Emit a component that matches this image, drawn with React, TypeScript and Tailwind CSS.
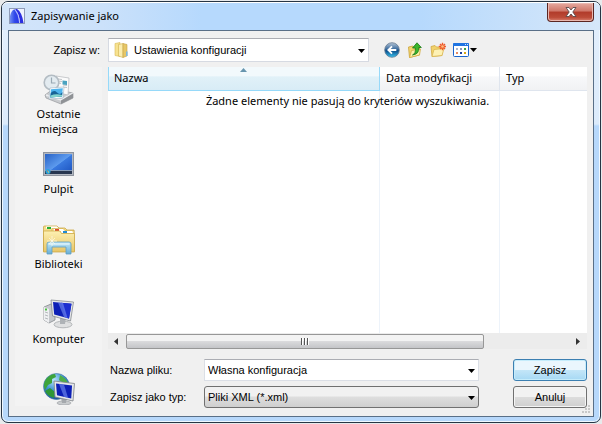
import type { ReactNode } from "react";
import { useState } from "react";

const ui = "font-['Noto_Sans','Open_Sans',sans-serif]";
const classic = "font-['Liberation_Sans',Arial,sans-serif]";

function AppIcon() {
  return (
    <svg width="16" height="16" viewBox="0 0 16 16" aria-hidden="true">
      <defs>
        <linearGradient id="arch" x1="0" y1="0" x2="1" y2="0">
          <stop offset="0" stopColor="#6f8cf2" />
          <stop offset="0.5" stopColor="#3048ea" />
          <stop offset="1" stopColor="#2a35e6" />
        </linearGradient>
      </defs>
      <rect x="0.5" y="0.5" width="15" height="15" fill="#eef3ff" stroke="#8f9cb8" />
      <path d="M6 1H8Q13 4 14.500 15H11Q10.500 6 6 1Z" fill="#2b2fe0" />
      <path d="M1 15V8Q2 3 5.500 1Q10 6 10.500 15Z" fill="url(#arch)" />
      <path d="M5.500 1Q10 6 10.700 15" fill="none" stroke="#c4d0ff" strokeWidth="0.7" />
    </svg>
  );
}

function FolderIcon() {
  return (
    <svg width="16" height="16" viewBox="0 0 16 16" aria-hidden="true">
      <path d="M1 1.500L6 0.500V14.500L1 13.500Z" fill="#f7e28f" stroke="#d9bb58" strokeWidth="0.6" />
      <path d="M4.500 2.500L9 1.500V15.500L4.500 14Z" fill="#fbedae" stroke="#cfae4c" strokeWidth="0.6" />
      <path d="M9 1.500L13 2.500V14L9 15.500Z" fill="#e6c767" stroke="#c6a145" strokeWidth="0.6" />
      <path d="M12 9.500h1.600v4.500H12z" fill="#7fb6df" />
    </svg>
  );
}

function BackIcon() {
  return (
    <svg width="16" height="16" viewBox="0 0 16 16" aria-hidden="true">
      <defs>
        <linearGradient id="orb" x1="0" y1="0" x2="0" y2="1">
          <stop offset="0" stopColor="#b4c4d6" />
          <stop offset="0.4" stopColor="#4674a4" />
          <stop offset="0.55" stopColor="#0c4d8a" />
          <stop offset="1" stopColor="#38c3f0" />
        </linearGradient>
      </defs>
      <circle cx="8" cy="8" r="7.3" fill="url(#orb)" stroke="#667a90" strokeWidth="0.8" />
      <path d="M12.300 8H4.800M8 4.300L4.300 8L8 11.700" fill="none" stroke="#fff" strokeWidth="1.800" />
    </svg>
  );
}

function UpIcon() {
  return (
    <svg width="16" height="16" viewBox="0 0 16 16" aria-hidden="true">
      <path d="M1.500 5L6 4L7 5.500L12.500 5V13L2.500 15.500Z" fill="#f4d56d" stroke="#c9a23a" strokeWidth="0.8" />
      <path d="M2.500 15.500L4.500 8.500L13.500 7L12.500 13Z" fill="#fdf0a9" stroke="#d3ad45" strokeWidth="0.8" />
      <path d="M5.500 13Q9 11.500 8.300 6H5.500L10 0.800L14.300 5.500H11.800Q12.500 12 5.500 13Z" fill="#3bb52b" stroke="#187a17" strokeWidth="0.8" />
    </svg>
  );
}

function NewFolderIcon() {
  return (
    <svg width="16" height="16" viewBox="0 0 16 16" aria-hidden="true">
      <path d="M1 4.500L5 3.500L6.500 5L12 5V13.500L2 14.500Z" fill="#f2d26b" stroke="#cfa945" strokeWidth="0.8" />
      <path d="M2 14.500L4 7.500L14 6.500L12 13.500Z" fill="#fdf1b4" stroke="#d9b650" strokeWidth="0.8" />
      <path d="M12.500 0.800V8.200M8.800 4.500H16M10 2L15 7M15 2L10 7" stroke="#ee5a2c" strokeWidth="1.400" />
      <circle cx="12.500" cy="4.500" r="1.300" fill="#ffc080" />
    </svg>
  );
}

function ViewIcon() {
  return (
    <svg width="16" height="16" viewBox="0 0 16 16" aria-hidden="true">
      <rect x="0.500" y="1.500" width="15" height="13" rx="1" fill="#fff" stroke="#1a64cc" />
      <path d="M0 2Q0 1 1 1H15Q16 1 16 2V4H0Z" fill="#1f74e2" />
      <path d="M12 2h1v1h-1zM14 2h1v1h-1z" fill="#cfe2ff" />
      <path d="M3 6h2v2H3z" fill="#a9b5cc" />
      <path d="M7 6h2v2H7z" fill="#8a97b8" />
      <path d="M11 6h2v2h-2z" fill="#37a04a" />
      <path d="M3 10h2v2H3z" fill="#e58a63" />
      <path d="M7 10h2v2H7z" fill="#1c3f9e" />
      <path d="M11 10h2v2h-2z" fill="#d9a616" />
    </svg>
  );
}

function RecentIcon() {
  return (
    <svg width="32" height="32" viewBox="0 0 32 32" aria-hidden="true">
      <path d="M2 22L10 16L30 20V25L18 31L3 25Z" fill="#c9cbce" stroke="#96999d" strokeWidth="0.7" />
      <path d="M3 22L18 27L30 20" fill="none" stroke="#eceef0" strokeWidth="1.5" />
      <path d="M18 27.500V31L30 25V20.500Z" fill="#8f9296" />
      <path d="M13 3L26 5L25 22L12 19Z" fill="#fbfbfb" stroke="#b5b8bb" strokeWidth="0.7" />
      <path d="M15 6l4 .5M15 8l4 .5M15 10l3 .4M20 12l4 .5M20 14l4 .5" stroke="#c0c5ca" />
      <path d="M19.500 7.500l4.500.600v4l-4.500-.600z" fill="#4aa3c0" />
      <circle cx="8.500" cy="9.500" r="7.300" fill="#e3ebf0" stroke="#b3bcc3" strokeWidth="1.600" />
      <path d="M8.500 4.500V10H12.500" fill="none" stroke="#9aa9b4" strokeWidth="1.200" />
      <path d="M7 15L21 14L20 25L6 26Z" fill="#fff" stroke="#9eb4c4" strokeWidth="0.6" />
      <path d="M8 16.200L19.800 15.200L19 23.500L7.200 24.600Z" fill="#4db4ee" />
      <path d="M7.800 20Q11 16.500 14 19.500T19.500 19L19 23.500L7.200 24.600Z" fill="#176397" />
      <path d="M7.500 22.500Q13 20.500 19.200 22L19 23.500L7.200 24.600Z" fill="#83d4ce" />
    </svg>
  );
}

function DesktopIcon() {
  return (
    <svg width="32" height="32" viewBox="0 0 32 32" aria-hidden="true">
      <defs>
        <linearGradient id="wall" x1="0" y1="0" x2="1" y2="1">
          <stop offset="0" stopColor="#2862c6" />
          <stop offset="0.5" stopColor="#5d9bee" />
          <stop offset="0.52" stopColor="#3979df" />
          <stop offset="1" stopColor="#1a50bd" />
        </linearGradient>
      </defs>
      <rect x="0.500" y="4.500" width="30" height="23" fill="#b3b8c1" stroke="#8e949e" />
      <rect x="2" y="6" width="27" height="20" fill="url(#wall)" />
      <rect x="2" y="23" width="27" height="3" fill="#27364f" />
      <path d="M2 22.500H29" stroke="#8399b7" />
      <circle cx="5" cy="23.500" r="2.500" fill="#28a5dd" />
      <path d="M4 22.500h1v1H4z" fill="#f1743a" />
      <path d="M5 23.500h1v1H5z" fill="#f7dc57" />
    </svg>
  );
}

function LibrariesIcon() {
  return (
    <svg width="32" height="32" viewBox="0 0 32 32" aria-hidden="true">
      <defs>
        <linearGradient id="lib" x1="0" y1="0" x2="0" y2="1">
          <stop offset="0" stopColor="#fdf0b2" />
          <stop offset="1" stopColor="#e8c566" />
        </linearGradient>
        <linearGradient id="stand" x1="0" y1="0" x2="0" y2="1">
          <stop offset="0" stopColor="#c4e9f8" />
          <stop offset="1" stopColor="#68add4" />
        </linearGradient>
      </defs>
      <path d="M0.500 28V4Q0.500 3 1.500 3H14L16 5H22L24 7H31V28Z" fill="#f5dd8a" stroke="#cba849" strokeWidth="0.8" />
      <path d="M3 3.500H14L15.500 5.500H3Z" fill="#fff" />
      <path d="M4 4h4v2H4z" fill="#29ae36" />
      <path d="M9 28V5.500H20L22 7.500H31V28Z" fill="#f8e398" stroke="#cba849" strokeWidth="0.6" />
      <path d="M11 6H20L21.500 8H11Z" fill="#fff" />
      <path d="M12 6h4v2h-4z" fill="#df4d32" />
      <path d="M18 8H29L30 10H18Z" fill="#fff" />
      <path d="M20 8h4v2h-4z" fill="#218bd4" />
      <path d="M0.500 8H17L18.500 10.500H31.500V29H0.500Z" fill="url(#lib)" stroke="#c9a33f" strokeWidth="0.7" />
      <path d="M4 31V21Q4 19 6 19H26Q28 19 28 21V31H23V24H9V31Z" fill="url(#stand)" stroke="#5e9fc3" strokeWidth="0.8" />
      <path d="M5.500 21H26.500" stroke="#eefaff" />
      <path d="M9 13V23M4 18H14M6 15L12 21M12 15L6 21" stroke="#fffbe8" strokeWidth="0.7" />
    </svg>
  );
}

function ComputerIcon() {
  return (
    <svg width="32" height="32" viewBox="0 0 32 32" aria-hidden="true">
      <path d="M1 9L8 6L12 8V22L6 25L1 22Z" fill="#c5c8cc" stroke="#85898d" strokeWidth="0.8" />
      <path d="M1 9L6 11V25L1 22Z" fill="#eff0f2" />
      <path d="M2 14l3 1M2 17l3 1M2 20l3 1" stroke="#b4b8bc" />
      <path d="M2 10.500h2v2H2z" fill="#4bbd42" />
      <ellipse cx="20" cy="26.500" rx="9" ry="3.300" fill="#dfe0e1" stroke="#a4a8ab" strokeWidth="0.8" />
      <path d="M17 19H23L22 26H17Z" fill="#aeb2b6" />
      <path d="M8 2L30.500 4L27.500 23L9.500 18Z" fill="#e5e7e9" stroke="#878c91" strokeWidth="0.8" />
      <path d="M10 4L28.500 5.700L26 20.500L11.200 16.500Z" fill="#0c1fb6" />
      <path d="M18 4.700L28.500 5.700L26 20.500L23 19.700Z" fill="#1c2fd0" />
      <path d="M15 4.500L20 5L24.500 20L21 19.100Z" fill="#7992f4" opacity="0.6" />
    </svg>
  );
}

function NetworkIcon() {
  return (
    <svg width="32" height="32" viewBox="0 0 32 32" aria-hidden="true">
      <defs>
        <radialGradient id="globe" cx="0.4" cy="0.25" r="0.8">
          <stop offset="0" stopColor="#b8e6fa" />
          <stop offset="0.5" stopColor="#3b91d1" />
          <stop offset="1" stopColor="#134d99" />
        </radialGradient>
      </defs>
      <circle cx="13.500" cy="13.500" r="13" fill="url(#globe)" stroke="#42719f" strokeWidth="0.6" />
      <path d="M4 5Q8 1 12 1L13 4L9 6L9 10L5 12L2 17L1 13Q1 8 4 5Z" fill="#3da43b" />
      <path d="M2 18L7 15L12 19L11 25Q4 23 2 18Z" fill="#2f9736" />
      <path d="M17 2Q23 5 25 10L20 10L16 7Z" fill="#4fae48" />
      <ellipse cx="21" cy="30" rx="7" ry="2" fill="#c9ccce" stroke="#979b9f" strokeWidth="0.6" />
      <path d="M18 25H24L23 30H19Z" fill="#a5a9ad" />
      <path d="M11 8L31.500 10.500L30 28L12 24Z" fill="#e5e7e9" stroke="#7c8186" strokeWidth="0.8" />
      <path d="M13 10.500L29 12.500L28.200 25.500L14 22.200Z" fill="#0c1fb6" />
      <path d="M16 10.900L21 11.500L25 24.800L21 23.800Z" fill="#7992f4" opacity="0.6" />
    </svg>
  );
}

function Arrow({ className = "" }: { className?: string }) {
  return (
    <svg width="7" height="4" viewBox="0 0 7 4" className={className} aria-hidden="true">
      <path d="M0 0H7L3.500 4Z" fill="#000" />
    </svg>
  );
}

function Place({ label, children }: { label?: string; children: ReactNode }) {
  return (
    <button type="button" className="flex h-[75px] w-full shrink-0 flex-col items-center gap-px leading-[15px]">
      {children}
      {label && <span className="w-16 text-center">{label}</span>}
    </button>
  );
}

export default function App() {
  const [fileName, setFileName] = useState("Własna konfiguracja");

  return (
    <div className={`flex min-h-screen bg-[#e8eaec] p-px text-black ${ui} text-[11px]`}>
      <main className="flex min-w-0 flex-1 flex-col rounded-[7px] border border-[#273544] bg-[#b9d9fb] bg-[linear-gradient(to_bottom,#e3effc_0,#dcebfb_122px,#b7d8fb_124px)] px-1.5 pb-[5px] shadow-[inset_0_0_0_1px_#f0f8ff]">
        <header className="-mx-1.5 flex h-7 items-start justify-between rounded-t-[6px] border-t border-white bg-[linear-gradient(to_right,#d3e5fa,#cbe1fa_100px,#b6d9fd_200px,#b6d9fd_70%,#d6e7f9)] pl-[7px]">
          <div className="flex items-center gap-1.5 pt-[5px]">
            <AppIcon />
            <h1 className="leading-4">Zapisywanie jako</h1>
          </div>
          <button
            type="button"
            aria-label="Zamknij"
            className="mr-1.5 flex h-[19px] w-[47px] items-center justify-center rounded-b-[4px] border border-t-0 border-[#5b2622] bg-[linear-gradient(to_bottom,#e6a99f,#cf7769_45%,#b13b2a_50%,#bc4b38_80%,#d98170)] shadow-[inset_0_0_0_1px_#e9b8b0]"
          >
            <svg width="12" height="10" viewBox="0 0 12 10" aria-hidden="true">
              <path d="M1 0.500H4L6 3L8 0.500H11L7.800 5L11 9.500H8L6 7L4 9.500H1L4.200 5Z" fill="#fff" stroke="#5b4a4a" strokeWidth="0.900" />
            </svg>
          </button>
        </header>

        <form
          onSubmit={(e) => e.preventDefault()}
          className="relative flex flex-1 flex-col border border-[#596f87] bg-[#f0f0f0] px-1.5 pt-[7px] pb-[7px]"
        >
          <div className={`flex h-6 items-center ${classic}`}>
            <label htmlFor="folder" className="w-[93px] shrink-0 pr-2 text-right">
              Zapisz w:
            </label>
            <div className="relative h-full w-[261px]">
              <select
                id="folder"
                className="h-full w-full appearance-none border border-[#d6dae2] border-t-[#abadb3] bg-white pl-[25px] outline-none"
              >
                <option>Ustawienia konfiguracji</option>
              </select>
              <span className="pointer-events-none absolute top-1 left-1.5">
                <FolderIcon />
              </span>
              <Arrow className="pointer-events-none absolute top-[11px] right-1" />
            </div>
            <div className="ml-[15px] flex items-center gap-[7px]">
              <button type="button" aria-label="Wstecz"><BackIcon /></button>
              <button type="button" aria-label="W górę"><UpIcon /></button>
              <button type="button" aria-label="Nowy folder"><NewFolderIcon /></button>
              <button type="button" aria-label="Widok" className="flex items-center gap-px">
                <ViewIcon />
                <Arrow />
              </button>
            </div>
          </div>

          <div className="mt-[5px] flex flex-1 items-start">
            <nav className="mr-1.5 h-[339px] w-[87px] shrink-0 overflow-hidden bg-[#f3f3f3] pt-1.5">
              <Place label="Ostatnie miejsca"><RecentIcon /></Place>
              <Place label="Pulpit"><DesktopIcon /></Place>
              <Place label="Biblioteki"><LibrariesIcon /></Place>
              <Place label="Komputer"><ComputerIcon /></Place>
              <Place><NetworkIcon /></Place>
            </nav>

            <div className="flex min-w-0 flex-1 flex-col">
              <div className="relative bg-white">
                <table className="w-full table-fixed border-separate border-spacing-0 text-left">
                  <thead>
                    <tr className="h-6">
                      <th className="relative w-[272px] border-x border-b border-[#96d9f9] bg-[linear-gradient(to_bottom,#f2f9fc_40%,#e1f1f8_42%,#d8ecf6)] px-[5px] font-normal">
                        Nazwa
                        <svg width="7" height="4" viewBox="0 0 7 4" className="absolute top-px left-1/2 -translate-x-1" aria-hidden="true">
                          <path d="M0 4L3.500 0L7 4Z" fill="#6795ae" />
                        </svg>
                      </th>
                      <th className="w-[120px] border-r border-b border-[#dfe5ee] bg-[linear-gradient(to_bottom,#fff_40%,#f7f8fa_42%,#f1f2f4)] px-[6px] font-normal">
                        Data modyfikacji
                      </th>
                      <th className="border-b border-[#dfe5ee] bg-[linear-gradient(to_bottom,#fff_40%,#f7f8fa_42%,#f1f2f4)] px-[6px] font-normal">
                        Typ
                      </th>
                    </tr>
                  </thead>
                  <tbody>
                    <tr>
                      <td className="h-[242px] border-r border-[#edf3fa]" />
                      <td className="border-r border-[#edf3fa]" />
                      <td />
                    </tr>
                  </tbody>
                </table>
                <p className="absolute inset-x-0 top-[26px] text-center leading-4">
                  Żadne elementy nie pasują do kryteriów wyszukiwania.
                </p>
              </div>

              <div className="flex h-4 items-center bg-[#ececec]">
                <svg width="18" height="7" viewBox="0 0 18 7" aria-hidden="true">
                  <path d="M10 0V7L6 3.500Z" fill="#333" />
                </svg>
                <div className="flex h-[15px] w-[358px] items-center justify-center gap-px rounded-[2px] border border-[#979797] bg-[linear-gradient(to_bottom,#f3f3f3_45%,#dadadc_50%,#c4c5c8)]">
                  <span className="h-[7px] w-0.5 border-l border-[#555] bg-white" />
                  <span className="h-[7px] w-0.5 border-l border-[#555] bg-white" />
                  <span className="h-[7px] w-0.5 border-l border-[#555] bg-white" />
                </div>
                <svg width="18" height="7" viewBox="0 0 18 7" className="ml-auto" aria-hidden="true">
                  <path d="M7 0V7L11 3.500Z" fill="#333" />
                </svg>
              </div>

              <div className={`mt-[10px] grid grid-cols-[94px_275px_1fr] items-center gap-y-[5px] pl-0.5 ${classic}`}>
                <label htmlFor="name">Nazwa pliku:</label>
                <div className="relative">
                  <input
                    id="name"
                    value={fileName}
                    onChange={(e) => setFileName(e.target.value)}
                    className="block h-[22px] w-full border border-[#dbdfe6] border-t-[#abadb3] bg-white pr-5 pl-[3px] outline-none"
                  />
                  <Arrow className="pointer-events-none absolute top-[10px] right-1" />
                </div>
                <button
                  type="submit"
                  className="ml-[34px] h-[22px] w-[74px] rounded-[3px] border border-[#3c7fb1] bg-[linear-gradient(to_bottom,#eaf6fd_48%,#c4e6f8_50%,#a6d9f4)] shadow-[inset_0_0_0_1px_#c5ecfb]"
                >
                  Zapisz
                </button>
                <label htmlFor="type">Zapisz jako typ:</label>
                <div className="relative">
                  <select
                    id="type"
                    className="block h-[22px] w-full appearance-none rounded-[3px] border border-[#707070] bg-[linear-gradient(to_bottom,#f1f1f1_45%,#dedede_50%,#cfcfcf)] pl-[3px] outline-none"
                  >
                    <option>Pliki XML (*.xml)</option>
                  </select>
                  <Arrow className="pointer-events-none absolute top-[10px] right-1" />
                </div>
                <button
                  type="button"
                  className="ml-[34px] h-[22px] w-[74px] rounded-[3px] border border-[#707070] bg-[linear-gradient(to_bottom,#f2f2f2_48%,#dddddd_50%,#cfcfcf)] shadow-[inset_0_0_0_1px_#f5f5f5]"
                >
                  Anuluj
                </button>
              </div>
            </div>
          </div>
          <svg width="9" height="9" viewBox="0 0 9 9" className="absolute right-0.5 bottom-0.5" aria-hidden="true">
            <path d="M6 0h2v2H6zM3 3h2v2H3zM6 3h2v2H6zM0 6h2v2H0zM3 6h2v2H3zM6 6h2v2H6z" fill="#c8c8c8" />
          </svg>
        </form>
      </main>
    </div>
  );
}
